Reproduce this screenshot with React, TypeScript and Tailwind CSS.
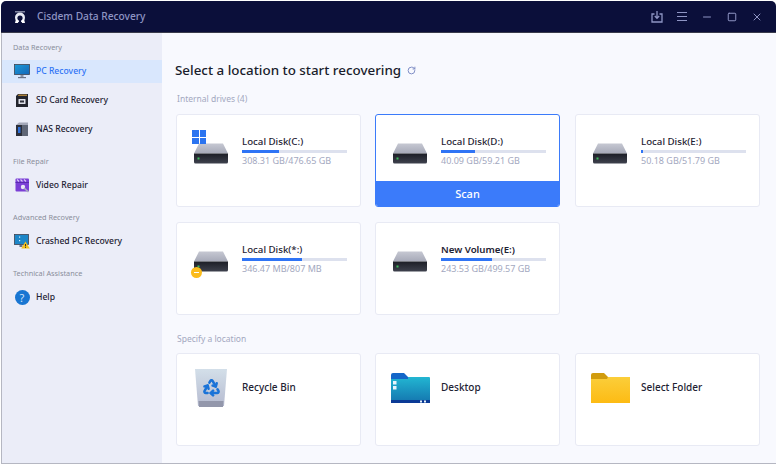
import type { ReactNode } from "react"
import { Minus, Recycle, RotateCw, Square, X } from "lucide-react"

const FONT = "font-['Noto_Sans','Open_Sans',sans-serif]"

function Logo() {
  return (
    <svg width="14" height="14" viewBox="0 0 14 14">
      <path d="M2 1h10v1.5H2z" fill="#cfd3e6" opacity="0.6" />
      <circle cx="7" cy="7.5" r="5" fill="#e8eaf4" />
      <circle cx="7" cy="8" r="2.6" fill="#0b0f3a" />
      <path d="M2 13l1-4 2 1 0 3zM12 13l-1-4-2 1 0 3z" fill="#ffffff" />
      <rect x="6" y="7" width="2" height="6" fill="#0b0f3a" />
    </svg>
  )
}

function TrayDownload() {
  return (
    <svg width="12" height="12" viewBox="0 0 12 12" fill="none" stroke="#8f95c4" strokeWidth="1.3">
      <path d="M3.5 3H1v8h10V3H8.5" />
      <path d="M6 0v7M3.8 5L6 7.4 8.2 5" />
    </svg>
  )
}

function Monitor() {
  return (
    <svg width="16" height="15" viewBox="0 0 16 15">
      <defs>
        <linearGradient id="mon" x1="0" y1="0" x2="1" y2="1">
          <stop offset="0" stopColor="#1a9ad8" />
          <stop offset="1" stopColor="#1466b8" />
        </linearGradient>
      </defs>
      <rect x="0.5" y="0.5" width="15" height="10" fill="url(#mon)" stroke="#3c4454" strokeWidth="0.8" />
      <rect x="6.5" y="11" width="3" height="2" fill="#8a93a6" />
      <rect x="4" y="13" width="8" height="1.2" fill="#6b7488" />
    </svg>
  )
}

function SdCard() {
  return (
    <svg width="14" height="15" viewBox="0 0 14 15">
      <path d="M3 1h10v13H1V3z" fill="#23252e" />
      <path d="M3.5 1.5h8.5v1.5H3z" fill="#a9803a" />
      <rect x="3.5" y="6" width="7" height="5" rx="0.5" fill="#dfe1ea" />
      <rect x="5" y="7.5" width="4" height="2" fill="#30323c" />
    </svg>
  )
}

function Nas() {
  return (
    <svg width="14" height="15" viewBox="0 0 14 15">
      <path d="M1 3l3-2.5h9V3z" fill="#a4a8b8" />
      <rect x="1" y="3" width="12" height="11" fill="#2c2f3a" />
      <rect x="7" y="3" width="6" height="11" fill="#5f6676" />
      <rect x="3" y="5" width="2.5" height="6" fill="#2e6fd8" />
    </svg>
  )
}

function VideoRepair() {
  return (
    <svg width="15" height="15" viewBox="0 0 15 15">
      <rect x="0.5" y="0.5" width="13.5" height="13" rx="1" fill="#7b3fd6" />
      <path d="M2 1.5l2 2M5.5 1.5l2 2M9 1.5l2 2" stroke="#d9c8f7" strokeWidth="1.2" />
      <rect x="0.5" y="4" width="13.5" height="1" fill="#5a2cae" />
      <circle cx="8" cy="9" r="2.2" fill="#e9e6f5" />
      <path d="M9 10l4.5 4" stroke="#a8aebf" strokeWidth="1.6" />
    </svg>
  )
}

function Crashed() {
  return (
    <svg width="16" height="15" viewBox="0 0 16 15">
      <rect x="0.5" y="0.5" width="14" height="10" fill="#1c86c8" stroke="#3c4454" strokeWidth="0.8" />
      <rect x="5" y="2.5" width="1.2" height="1.2" fill="#d8f0ff" />
      <rect x="5" y="6" width="1.2" height="1.2" fill="#d8f0ff" />
      <rect x="5.5" y="11" width="3" height="2" fill="#6b7488" />
      <path d="M11.5 7.5l4.3 7h-8.6z" fill="#f6c21c" />
      <rect x="11.1" y="10" width="0.9" height="2.4" fill="#2a2a2a" />
      <rect x="11.1" y="13" width="0.9" height="0.9" fill="#2a2a2a" />
    </svg>
  )
}

function HelpIcon() {
  return (
    <span className="flex h-[15px] w-[15px] items-center justify-center rounded-full bg-[#1976d2] text-[11px] leading-none text-[#cfe4fa]">
      ?
    </span>
  )
}

function Drive() {
  return (
    <svg width="36" height="21" viewBox="0 0 36 21">
      <defs>
        <linearGradient id="top" x1="0" y1="0" x2="0" y2="1">
          <stop offset="0" stopColor="#c6c8d2" />
          <stop offset="1" stopColor="#a6a9b8" />
        </linearGradient>
        <linearGradient id="front" x1="0" y1="0" x2="0" y2="1">
          <stop offset="0" stopColor="#1c1e26" />
          <stop offset="1" stopColor="#3e414d" />
        </linearGradient>
      </defs>
      <path d="M6 0.5h24l5 10H1z" fill="url(#top)" />
      <path d="M1 10.5h34v8.5a1.5 1.5 0 0 1-1.5 1.5h-31A1.5 1.5 0 0 1 1 19z" fill="url(#front)" />
      <rect x="4.5" y="14.5" width="2" height="2" fill="#3dbb5a" />
    </svg>
  )
}

function WinLogo() {
  return (
    <span className="grid h-[14px] w-[14px] grid-cols-2 gap-px">
      <span className="bg-[#2b74f0]" />
      <span className="bg-[#2b74f0]" />
      <span className="bg-[#2b74f0]" />
      <span className="bg-[#2b74f0]" />
    </span>
  )
}

function RecycleBin() {
  return (
    <span className="relative block h-[40px] w-[34px]">
      <svg width="34" height="40" viewBox="0 0 34 40">
        <defs>
          <linearGradient id="bin" x1="0" y1="0" x2="0" y2="1">
            <stop offset="0" stopColor="#d3dfe9" />
            <stop offset="1" stopColor="#b6bbd0" />
          </linearGradient>
        </defs>
        <path d="M1 1h32l-3 37H4z" fill="url(#bin)" />
        <path d="M4.5 33h25l-.5 6H5z" fill="#9397ab" />
      </svg>
      <Recycle size={19} strokeWidth={3.2} className="absolute left-[7.5px] top-[10px] text-[#1a73d8]" />
    </span>
  )
}

function DesktopFolder() {
  return (
    <svg width="39" height="30" viewBox="0 0 39 30">
      <defs>
        <linearGradient id="desk" x1="0" y1="0" x2="0" y2="1">
          <stop offset="0" stopColor="#22b6d2" />
          <stop offset="1" stopColor="#1474ae" />
        </linearGradient>
      </defs>
      <path d="M0 2a2 2 0 0 1 2-2h11l4 4H0z" fill="#1466c8" />
      <rect x="0" y="4" width="39" height="26" rx="1" fill="url(#desk)" />
      <path d="M0 4h17v2H0z" fill="#1466c8" />
      <rect x="0" y="27" width="39" height="3" fill="#0b3a96" />
      <rect x="2" y="8" width="3.5" height="3.5" fill="#e8f4fb" />
      <rect x="2" y="13" width="3.5" height="3.5" fill="#e8f4fb" />
      <rect x="29" y="27.5" width="2" height="2" fill="#e8f4fb" />
      <rect x="33" y="27.5" width="2" height="2" fill="#e8f4fb" />
    </svg>
  )
}

function YellowFolder() {
  return (
    <svg width="39" height="30" viewBox="0 0 39 30">
      <defs>
        <linearGradient id="fold" x1="0" y1="0" x2="0" y2="1">
          <stop offset="0" stopColor="#fbce3a" />
          <stop offset="1" stopColor="#fdbb14" />
        </linearGradient>
      </defs>
      <path d="M0 2a2 2 0 0 1 2-2h11l4 4v4H0z" fill="#d19c0e" />
      <path d="M0 6h16l1-2h22v26H0z" fill="url(#fold)" />
    </svg>
  )
}

function NavItem({ icon, label, active }: { icon: ReactNode; label: string; active?: boolean }) {
  return (
    <div className={`flex h-[23px] items-center ${active ? "bg-[#d9e7fd]" : ""}`}>
      <span className="flex w-[34px] justify-center pl-[6px]">{icon}</span>
      <span className={`text-[8.6px] font-medium ${active ? "text-[#2f74f5]" : "text-[#1e2233]"}`}>{label}</span>
    </div>
  )
}

function NavGroup({ title, children }: { title: string; children: ReactNode }) {
  return (
    <div className="mb-[15px]">
      <div className="mb-[6px] h-[12px] pl-[11px] text-[7.3px] leading-[10px] text-[#8a8d9b]">{title}</div>
      <div className="flex flex-col gap-[6px]">{children}</div>
    </div>
  )
}

function Card({ children, selected }: { children: ReactNode; selected?: boolean }) {
  return (
    <div
      className={`flex h-[93px] flex-col overflow-hidden rounded-[3px] border bg-white ${
        selected ? "border-[#3b7bfa]" : "border-[#e8eaf4]"
      }`}
    >
      {children}
    </div>
  )
}

function DiskCard({
  name,
  size,
  pct,
  selected,
  strong,
  overlay,
}: {
  name: string
  size: string
  pct: number
  selected?: boolean
  strong?: boolean
  overlay?: ReactNode
}) {
  return (
    <Card selected={selected}>
      <div className="flex flex-1 items-start pl-[16px] pt-[28px]">
        <div className="relative mr-[13px]">
          <Drive />
          {overlay}
        </div>
        <div className="-mt-[9px] w-[105px]">
          <div className={`h-[15px] text-[9.7px] leading-[15px] text-[#1e2233] ${strong ? "font-semibold" : "font-medium"}`}>
            {name}
          </div>
          <div className="mt-[1px] h-[3px] bg-[#dde1ee]">
            <div className="h-full bg-[#2f74f5]" style={{ width: `${pct}%` }} />
          </div>
          <div className="mt-[2px] text-[9px] leading-[12px] text-[#a3a8c0]">{size}</div>
        </div>
      </div>
      {selected && (
        <div className="flex h-[25px] items-center justify-center bg-[#3b7bfa] pt-px text-[11px] font-medium text-white">
          Scan
        </div>
      )}
    </Card>
  )
}

function PlaceCard({ icon, name }: { icon: ReactNode; name: string }) {
  return (
    <Card>
      <div className="flex h-[54px] items-center pl-[7px] pt-[12px]">
        <span className="mr-[4px] flex w-[54px] justify-center pt-[2px]">{icon}</span>
        <span className="text-[10px] font-medium text-[#1e2233]">{name}</span>
      </div>
    </Card>
  )
}

export default function App() {
  return (
    <div className={`${FONT} h-[466px] w-[777px] overflow-hidden bg-white px-px pt-px`}>
      <div className="flex h-[32px] items-center rounded-t-[5px] border-b border-[#3a3c4c] bg-[#0b0f3a] pl-[12px] pr-[13px]">
        <Logo />
        <span className="ml-[10px] text-[10.2px] font-medium text-[#8f95c4]">Cisdem Data Recovery</span>
        <div className="ml-auto flex items-center gap-[14px] text-[#8f95c4]">
          <TrayDownload />
          <span className="flex h-[9px] w-[10px] flex-col justify-between">
            <span className="h-px bg-[#8f95c4]" />
            <span className="h-px bg-[#8f95c4]" />
            <span className="h-px bg-[#8f95c4]" />
          </span>
          <Minus size={12} />
          <Square size={10} strokeWidth={2.4} />
          <X size={12} />
        </div>
      </div>

      <div className="flex h-[431px] border-b border-l border-[#b5b7c2]">
        <aside className="w-[160px] shrink-0 bg-[#ebedf8] pt-[9px]">
          <NavGroup title="Data Recovery">
            <NavItem icon={<Monitor />} label="PC Recovery" active />
            <NavItem icon={<SdCard />} label="SD Card Recovery" />
            <NavItem icon={<Nas />} label="NAS Recovery" />
          </NavGroup>
          <NavGroup title="File Repair">
            <NavItem icon={<VideoRepair />} label="Video Repair" />
          </NavGroup>
          <NavGroup title="Advanced Recovery">
            <NavItem icon={<Crashed />} label="Crashed PC Recovery" />
          </NavGroup>
          <NavGroup title="Technical Assistance">
            <NavItem icon={<HelpIcon />} label="Help" />
          </NavGroup>
        </aside>

        <main className="flex-1 bg-[#f8f9fe] pl-[14px] pr-[17px]">
          <div className="-ml-px flex h-[20px] items-center pt-[37px] text-[13.4px] text-[#1a1d2c]">
            <span className="font-medium">Select a location to start recovering</span>
            <RotateCw size={9} strokeWidth={2.6} className="ml-[6px] text-[#7d8cc4]" />
          </div>
          <div className="mt-[22px] h-[13px] pl-px text-[8.5px] leading-[13px] text-[#a3a8c0]">Internal drives (4)</div>
          <div className="mt-[9px] grid grid-cols-3 gap-x-[14px] gap-y-[15px] [&>*:nth-child(3)]:-mr-px [&>*:nth-child(3)]:ml-px">
            <DiskCard
              name="Local Disk(C:)"
              size="308.31 GB/476.65 GB"
              pct={35}
              overlay={
                <span className="absolute -left-[1px] -top-[13px]">
                  <WinLogo />
                </span>
              }
            />
            <DiskCard name="Local Disk(D:)" size="40.09 GB/59.21 GB" pct={32} selected />
            <DiskCard name="Local Disk(E:)" size="50.18 GB/51.79 GB" pct={2} />
            <DiskCard
              name="Local Disk(*:)"
              size="346.47 MB/807 MB"
              pct={57}
              overlay={
                <span className="absolute -bottom-[6px] -left-[2px] flex h-[11px] w-[11px] items-center justify-center rounded-full bg-[#fbbc1c]">
                  <span className="h-px w-[5px] bg-white" />
                </span>
              }
            />
            <DiskCard name="New Volume(E:)" size="243.53 GB/499.57 GB" pct={49} strong />
          </div>
          <div className="mt-[17px] h-[13px] pl-px text-[8.5px] leading-[13px] text-[#a3a8c0]">Specify a location</div>
          <div className="mt-[8px] grid grid-cols-3 gap-x-[14px] [&>*:nth-child(3)]:-mr-px [&>*:nth-child(3)]:ml-px">
            <PlaceCard icon={<RecycleBin />} name="Recycle Bin" />
            <PlaceCard icon={<DesktopFolder />} name="Desktop" />
            <PlaceCard icon={<YellowFolder />} name="Select Folder" />
          </div>
        </main>
      </div>
    </div>
  )
}
